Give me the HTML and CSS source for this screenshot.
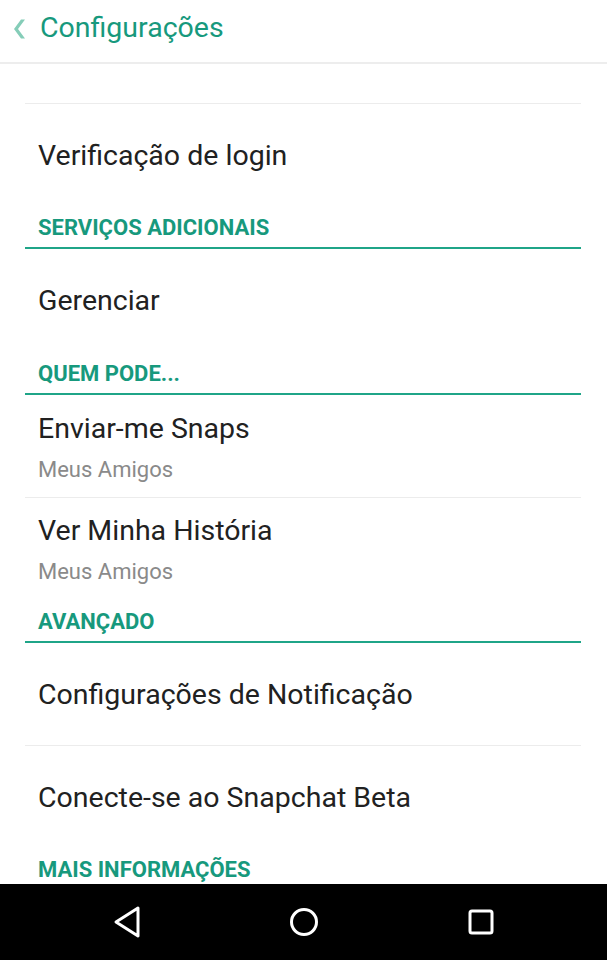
FILE: index.html
```html
<!DOCTYPE html>
<html lang="pt">
<head>
    <meta charset="UTF-8">
    <meta name="viewport" content="width=device-width, initial-scale=1.0">
    <title>Configurações</title>
    <link rel="stylesheet" href="styles.css">
</head>
<body>
    <div class="screen">
        <div class="topbar">
            <svg class="back" width="12" height="20" viewBox="0 0 12 20">
                <path d="M12 0.5 L5 10 L12 19.5 L8 19.5 L1 10 L8 0.5 Z" fill="#85cdb8"/>
            </svg>
            <span class="title">Configurações</span>
        </div>
        <div class="content">
            <div class="spacer"></div>
            <div class="item">Verificação de login</div>

            <div class="section">SERVIÇOS ADICIONAIS</div>
            <div class="item">Gerenciar</div>

            <div class="section">QUEM PODE...</div>
            <div class="item double divided">
                <div class="item-title">Enviar-me Snaps</div>
                <div class="item-sub">Meus Amigos</div>
            </div>
            <div class="item double">
                <div class="item-title">Ver Minha História</div>
                <div class="item-sub">Meus Amigos</div>
            </div>

            <div class="section">AVANÇADO</div>
            <div class="item divided">Configurações de Notificação</div>
            <div class="item">Conecte-se ao Snapchat Beta</div>

            <div class="section last">MAIS INFORMAÇÕES</div>
        </div>
        <div class="navbar">
            <svg width="30" height="34" viewBox="0 0 30 34">
                <path d="M26 3 L4 17 L26 31 Z" fill="none" stroke="#fff" stroke-width="3" stroke-linejoin="round"/>
            </svg>
            <svg width="30" height="30" viewBox="0 0 30 30">
                <circle cx="15" cy="15" r="12.5" fill="none" stroke="#fff" stroke-width="3"/>
            </svg>
            <svg width="30" height="30" viewBox="0 0 30 30">
                <rect x="4" y="4" width="22" height="22" rx="2" fill="none" stroke="#fff" stroke-width="3"/>
            </svg>
        </div>
    </div>
</body>
</html>
```

FILE: styles.css
```css
body {
    margin: 0;
    font-family: Roboto, "Noto Sans", sans-serif;
    background: #fff;
}
.screen {
    width: 607px;
    height: 960px;
    display: flex;
    flex-direction: column;
    overflow: hidden;
}
.topbar {
    height: 64px;
    box-sizing: border-box;
    border-bottom: 2px solid #ededed;
    display: flex;
    align-items: center;
    padding: 0 0 7px 13px;
    flex-shrink: 0;
}
.back {
    margin-right: 15px;
    margin-top: 2px;
}
.title {
    color: #17997d;
    font-size: 28.5px;
}
.content {
    flex: 1;
    padding: 0 26px 0 25px;
    overflow: hidden;
}
.spacer {
    height: 39px;
    border-bottom: 1px solid #ececec;
}
.item {
    color: #212121;
    font-size: 28.5px;
    line-height: 40px;
    padding: 32px 0 0 13px;
    height: 102px;
    box-sizing: border-box;
}
.content > .item:nth-child(2),
.item:nth-last-child(2) {
    height: 101px;
}
.item.divided {
    height: 103px;
    border-bottom: 1px solid #ececec;
}
.double {
    padding-top: 14px;
}
.double + .double {
    padding-top: 13px;
    height: 101px;
}
.item-sub {
    color: #8a8a8a;
    font-size: 22px;
    line-height: 41px;
}
.section {
    color: #17997d;
    font-size: 22px;
    font-weight: bold;
    padding: 3px 0 0 13px;
    height: 44px;
    line-height: 40px;
    border-bottom: 2px solid #1fa588;
    box-sizing: border-box;
}
.section.last {
    border-bottom: none;
}
.navbar {
    height: 76px;
    background: #000;
    display: flex;
    align-items: center;
    justify-content: space-between;
    padding: 0 111px 0 112px;
    flex-shrink: 0;
}
```
